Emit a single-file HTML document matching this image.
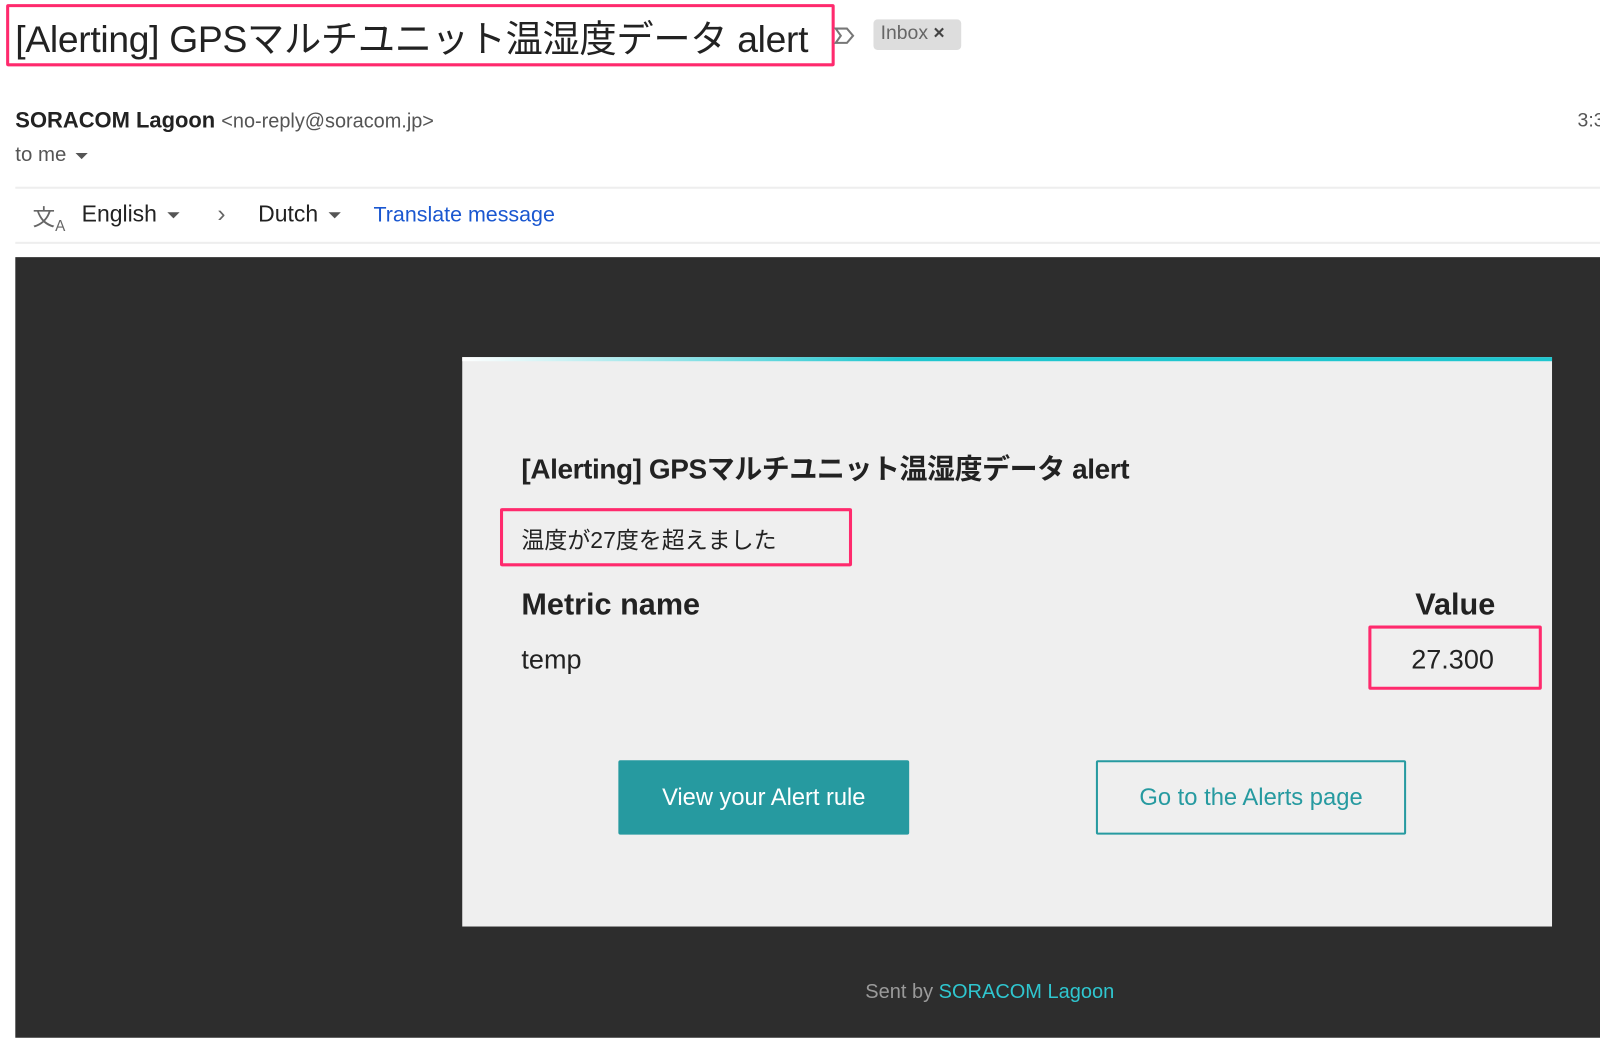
<!DOCTYPE html>
<html><head><meta charset="utf-8"><style>
*{margin:0;padding:0;box-sizing:border-box}
body{width:1600px;height:1017px;background:#fff;position:relative;overflow:hidden;font-family:"Liberation Sans","Noto Sans CJK JP",sans-serif;color:#222}
#w{position:absolute;left:0;top:0;width:1568px;height:997px;transform:scale(1.0204);transform-origin:0 0}
.a{position:absolute;white-space:nowrap}
.pk{position:absolute;border:3px solid #ff2a6d;border-radius:2px}
.tri{display:inline-block;width:0;height:0;border-left:6px solid transparent;border-right:6px solid transparent;border-top:6px solid #555;vertical-align:middle;margin-left:6px}
</style></head><body><div id="w">
<div class="pk" style="left:6px;top:4px;width:812px;height:61px"></div>
<div class="a" style="left:15px;top:9px;font-size:36.5px;color:#222;letter-spacing:-0.3px">[Alerting] GPSマルチユニット温湿度データ alert</div>
<svg class="a" style="left:816px;top:25px" width="24" height="20" viewBox="0 0 24 20"><path d="M3 3h11l6 7-6 7H3l5-7z" fill="none" stroke="#777" stroke-width="2"/></svg>
<div class="a" style="left:856px;top:19px;width:86px;height:30px;background:#ddd;border-radius:4px;font-size:19px;color:#666;padding:3px 0 0 7px">Inbox <span style="color:#444;font-weight:bold">×</span></div>
<div class="a" style="left:15px;top:106px;font-size:21.5px"><b style="color:#222">SORACOM Lagoon</b> <span style="font-size:19.5px;color:#555">&lt;no-reply@soracom.jp&gt;</span></div>
<div class="a" style="left:1546px;top:108px;font-size:19px;color:#555">3:3</div>
<div class="a" style="left:15px;top:141px;font-size:20px;color:#555">to me<span class="tri" style="margin-left:9px"></span></div>
<div class="a" style="left:15px;top:183px;width:1585px;height:2px;background:#eee"></div>
<div class="a" style="left:32px;top:196px;font-size:22px;color:#666">文<sub style="font-size:15px">A</sub></div>
<div class="a" style="left:80px;top:197px;font-size:22.5px;color:#222">English<span class="tri" style="margin-left:10px"></span></div>
<div class="a" style="left:213px;top:196px;font-size:24px;color:#666">›</div>
<div class="a" style="left:253px;top:197px;font-size:22.5px;color:#222">Dutch<span class="tri" style="margin-left:10px"></span></div>
<div class="a" style="left:366px;top:199px;font-size:21px;color:#1a57d0">Translate message</div>
<div class="a" style="left:15px;top:237px;width:1585px;height:2px;background:#eee"></div>
<div class="a" style="left:15px;top:252px;width:1585px;height:765px;background:#2d2d2d"></div>
<div class="a" style="left:453px;top:350px;width:1068px;height:558px;background:#efefef"></div>
<div class="a" style="left:453px;top:350px;width:1068px;height:4px;background:linear-gradient(90deg,#fff,#1fc6cf 40%,#1fc6cf)"></div>
<div class="a" style="left:511px;top:437px;font-size:27.4px;font-weight:bold;color:#222;letter-spacing:-0.4px">[Alerting] GPSマルチユニット温湿度データ alert</div>
<div class="pk" style="left:490px;top:498px;width:345px;height:57px"></div>
<div class="a" style="left:511px;top:512px;font-size:22.5px;color:#222">温度が27度を超えました</div>
<div class="a" style="left:511px;top:576px;font-size:30px;font-weight:bold;color:#222">Metric name</div>
<div class="a" style="left:1387px;top:576px;font-size:30px;font-weight:bold;color:#222">Value</div>
<div class="a" style="left:511px;top:631px;font-size:26.5px;color:#222">temp</div>
<div class="pk" style="left:1341px;top:613px;width:170px;height:63px"></div>
<div class="a" style="left:1383px;top:631px;font-size:26.5px;color:#222">27.300</div>
<div class="a" style="left:606px;top:745px;width:285px;height:73px;background:#269aa0;border-radius:2px;color:#fff;font-size:23.2px;text-align:center;line-height:73px">View your Alert rule</div>
<div class="a" style="left:1074px;top:745px;width:304px;height:73px;border:2px solid #269aa0;border-radius:2px;color:#269aa0;font-size:23.3px;text-align:center;line-height:69px">Go to the Alerts page</div>
<div class="a" style="left:848px;top:961px;font-size:19.6px;color:#9a9a9a">Sent by <span style="color:#2fc6cf">SORACOM Lagoon</span></div>
</div></body></html>
